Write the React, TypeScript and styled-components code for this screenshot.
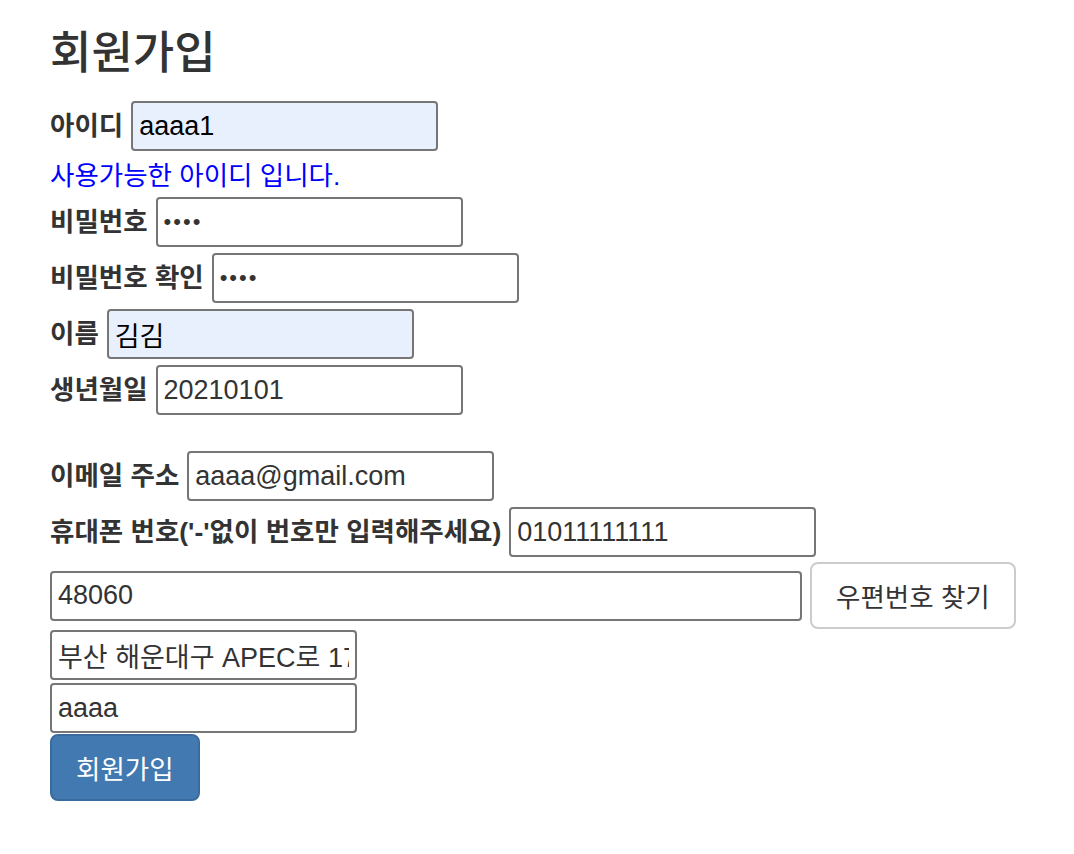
import styled, { createGlobalStyle } from 'styled-components';

const GlobalStyle = createGlobalStyle`
  body {
    margin: 0;
    background: #fff;
    color: #333;
    font-family: "Liberation Sans", "Noto Sans CJK KR", sans-serif;
  }
`;

const Page = styled.div`
  padding: 24px 0 40px 50px;
`;
const Title = styled.h2`
  margin: 0;
  font-size: 45px;
  line-height: 60px;
  font-weight: 500;
  color: #333;
`;
const Form = styled.form`
  display: flex;
  flex-direction: column;
  align-items: flex-start;
  margin-top: 17px;
`;
const Row = styled.div<{ $gap?: number }>`
  display: flex;
  align-items: center;
  gap: 8px;
  margin-top: ${(props) => props.$gap ?? 6}px;
`;
const Label = styled.label`
  font-size: 26.5px;
  font-weight: 700;
  line-height: 50px;
  color: #333;
  white-space: nowrap;
`;
const Input = styled.input<{ $filled?: boolean; $width?: number }>`
  box-sizing: border-box;
  width: ${(props) => props.$width ?? 307}px;
  height: 50px;
  margin: 0;
  padding: 0 6px;
  border: 2px solid #767676;
  border-radius: 4px;
  background: ${(props) => (props.$filled ? '#e8f0fe' : '#fff')};
  color: ${(props) => (props.$filled ? '#000' : '#333')};
  font-family: "Liberation Sans", "Noto Sans CJK KR", sans-serif;
  font-size: 27px;
  outline: none;
  &[type='password'] {
    font-size: 22px;
    letter-spacing: 2px;
  }
`;
const Message = styled.div`
  box-sizing: border-box;
  height: 46px;
  padding-top: 4px;
  font-size: 26.5px;
  line-height: 42px;
  color: #0000ff;
`;
const Button = styled.button<{ $primary?: boolean }>`
  box-sizing: border-box;
  height: 67px;
  margin: 0;
  padding: 0 24px;
  border: 2px solid ${(props) => (props.$primary ? '#3a6b9f' : '#cccccc')};
  border-radius: 8px;
  background: ${(props) => (props.$primary ? '#4279b1' : '#fff')};
  color: ${(props) => (props.$primary ? '#fff' : '#333')};
  font-family: "Liberation Sans", "Noto Sans CJK KR", sans-serif;
  font-size: 26.5px;
  cursor: pointer;
`;
const Stack = styled.div<{ $gap: number }>`
  margin-top: ${(props) => props.$gap}px;
  display: flex;
`;

export default function App() {
  return (
    <Page>
      <GlobalStyle />
      <Title>회원가입</Title>
      <Form onSubmit={(e) => e.preventDefault()}>
        <Row $gap={0}>
          <Label>아이디</Label>
          <Input $filled defaultValue="aaaa1" />
        </Row>
        <Message>사용가능한 아이디 입니다.</Message>
        <Row $gap={0}>
          <Label>비밀번호</Label>
          <Input type="password" defaultValue="aaaa" />
        </Row>
        <Row>
          <Label>비밀번호 확인</Label>
          <Input type="password" defaultValue="aaaa" />
        </Row>
        <Row>
          <Label>이름</Label>
          <Input $filled defaultValue="김김" />
        </Row>
        <Row>
          <Label>생년월일</Label>
          <Input defaultValue="20210101" />
        </Row>
        <Row $gap={36}>
          <Label>이메일 주소</Label>
          <Input defaultValue="aaaa@gmail.com" />
        </Row>
        <Row>
          <Label>휴대폰 번호('-'없이 번호만 입력해주세요)</Label>
          <Input defaultValue="01011111111" />
        </Row>
        <Row $gap={5}>
          <Input $width={752} readOnly value="48060" />
          <Button type="button">우편번호 찾기</Button>
        </Row>
        <Stack $gap={1}>
          <Input readOnly value="부산 해운대구 APEC로 17 (우동)" />
        </Stack>
        <Stack $gap={3}>
          <Input defaultValue="aaaa" />
        </Stack>
        <Stack $gap={1}>
          <Button $primary type="submit">회원가입</Button>
        </Stack>
      </Form>
    </Page>
  );
}
